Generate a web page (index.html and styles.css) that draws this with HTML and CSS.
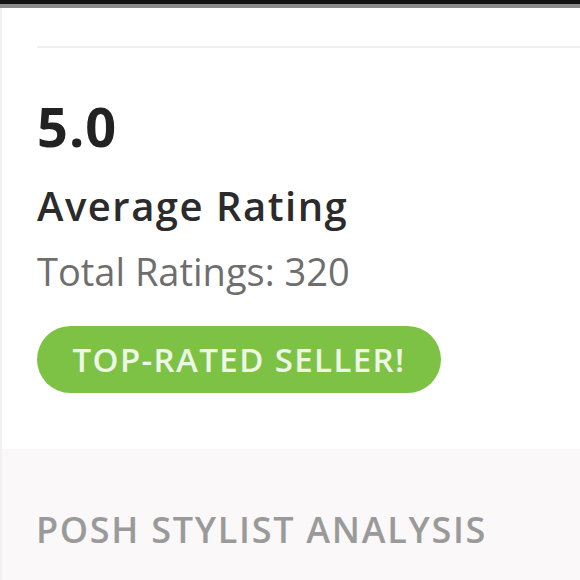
FILE: index.html
```html
<!DOCTYPE html>
<html>
<head>
<meta charset="utf-8">
<link rel="stylesheet" href="styles.css">
</head>
<body>
<div class="topbar"></div>
<div class="frame">
  <section class="rating">
    <div class="divider"></div>
    <div class="score">5.0</div>
    <div class="label">Average Rating</div>
    <div class="total">Total Ratings: 320</div>
    <div class="badge">TOP-RATED SELLER!</div>
  </section>
  <section class="analysis">
    <div class="heading">POSH STYLIST ANALYSIS</div>
  </section>
</div>
</body>
</html>
```
FILE: styles.css
```css
html, body {
  margin: 0;
  padding: 0;
  background: #ffffff;
  font-family: "Open Sans", "Noto Sans", sans-serif;
}
body {
  width: 580px;
  height: 580px;
  overflow: hidden;
  display: flex;
  flex-direction: column;
}
.topbar {
  height: 4px;
  background: #121212;
  border-bottom: 4px solid #8a8a8a;
  flex: none;
}
.frame {
  flex: 1;
  display: flex;
  flex-direction: column;
  border-left: 2px solid #f3f0f0;
}
.rating {
  padding-left: 35px;
  height: 441px;
  flex: none;
  box-sizing: border-box;
  padding-top: 38px;
}
.divider {
  height: 2px;
  background: #f1f0f0;
}
.score {
  margin-top: 51px;
  font-size: 54px;
  font-weight: 700;
  color: #222222;
  line-height: 54px;
  letter-spacing: 1px;
}
.label {
  margin-top: 33px;
  font-size: 40px;
  font-weight: 600;
  color: #2b2b2b;
  line-height: 40px;
  letter-spacing: 1.5px;
}
.total {
  margin-top: 26px;
  font-size: 38px;
  font-weight: 400;
  color: #6e6e6e;
  line-height: 38px;
}
.badge {
  margin-top: 36px;
  width: 404px;
  height: 67px;
  border-radius: 34px;
  background: #7dc245;
  color: #eef7e6;
  font-size: 33px;
  font-weight: 600;
  letter-spacing: 1.4px;
  display: flex;
  align-items: center;
  justify-content: center;
}
.analysis {
  flex: 1;
  background: #faf8f8;
  padding-left: 34px;
  padding-top: 63px;
  box-sizing: border-box;
}
.heading {
  font-size: 36px;
  font-weight: 600;
  color: #9a9a9a;
  letter-spacing: 1.7px;
  line-height: 36px;
}
```
